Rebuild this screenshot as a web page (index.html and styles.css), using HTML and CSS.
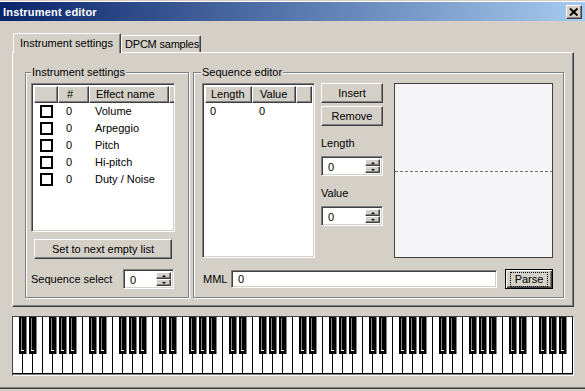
FILE: index.html
```html
<!DOCTYPE html>
<html>
<head>
<meta charset="utf-8">
<title>Instrument editor</title>
<link rel="stylesheet" href="styles.css">
</head>
<body>
<div class="window">
  <div class="titlebar">
    <span class="title">Instrument editor</span>
    <span class="close raised"><svg width="14" height="12" viewBox="0 0 14 12"><path d="M3 2.5 L10.5 9.5 M10.5 2.5 L3 9.5" stroke="#000" stroke-width="1.8" fill="none"/></svg></span>
  </div>
  <div class="client">
    <div class="tabs">
      <div class="tab active">Instrument settings</div>
      <div class="tab">DPCM samples</div>
    </div>
    <div class="panel">
      <fieldset class="group inst">
        <legend>Instrument settings</legend>
        <div class="inst-body">
          <div class="list sunken inst-list">
            <div class="lhead">
              <span class="hc c-chk"></span><span class="hc c-num">#</span><span class="hc c-name">Effect name</span><span class="hc c-rest"></span>
            </div>
            <div class="lrow"><span class="c-chk"><i class="chk"></i></span><span class="c-num">0</span><span class="c-name">Volume</span></div>
            <div class="lrow"><span class="c-chk"><i class="chk"></i></span><span class="c-num">0</span><span class="c-name">Arpeggio</span></div>
            <div class="lrow"><span class="c-chk"><i class="chk"></i></span><span class="c-num">0</span><span class="c-name">Pitch</span></div>
            <div class="lrow"><span class="c-chk"><i class="chk"></i></span><span class="c-num">0</span><span class="c-name">Hi-pitch</span></div>
            <div class="lrow"><span class="c-chk"><i class="chk"></i></span><span class="c-num">0</span><span class="c-name">Duty / Noise</span></div>
          </div>
          <div class="btn raised next-btn">Set to next empty list</div>
          <div class="seq-select">
            <span>Sequence select</span>
            <div class="spin sunken seq-spin">
              <span class="spin-val">0</span>
              <span class="spin-btns"><span class="sb raised"><i class="up"></i></span><span class="sb raised"><i class="down"></i></span></span>
            </div>
          </div>
        </div>
      </fieldset>
      <fieldset class="group seq">
        <legend>Sequence editor</legend>
        <div class="seq-body">
          <div class="seq-top">
            <div class="list sunken seq-list">
              <div class="lhead">
                <span class="hc s-len">Length</span><span class="hc s-val">Value</span><span class="hc c-rest"></span>
              </div>
              <div class="lrow"><span class="s-len">0</span><span class="s-val">0</span></div>
            </div>
            <div class="mid">
              <div class="btn raised mid-btn">Insert</div>
              <div class="btn raised mid-btn gap3">Remove</div>
              <div class="mlabel first">Length</div>
              <div class="spin sunken mid-spin">
                <span class="spin-val">0</span>
                <span class="spin-btns"><span class="sb raised"><i class="up"></i></span><span class="sb raised"><i class="down"></i></span></span>
              </div>
              <div class="mlabel second">Value</div>
              <div class="spin sunken mid-spin">
                <span class="spin-val">0</span>
                <span class="spin-btns"><span class="sb raised"><i class="up"></i></span><span class="sb raised"><i class="down"></i></span></span>
              </div>
            </div>
            <div class="graph"><div class="dash"></div></div>
          </div>
          <div class="mml-row">
            <span class="mml-label">MML</span>
            <div class="sunken mml-input">0</div>
            <div class="btn default parse"><span class="focus">Parse</span></div>
          </div>
        </div>
      </fieldset>
    </div>
    <div class="piano">
      <svg width="560" height="58" viewBox="0 0 560 58">
        <defs>
          <pattern id="oct" width="70" height="58" patternUnits="userSpaceOnUse">
            <rect width="70" height="58" fill="#fff"/>
            <g fill="#000">
              <rect x="9" width="1" height="57"/>
              <rect x="19" width="1" height="57"/>
              <rect x="29" width="1" height="57"/>
              <rect x="39" width="1" height="57"/>
              <rect x="49" width="1" height="57"/>
              <rect x="59" width="1" height="57"/>
              <rect x="69" width="1" height="57"/>
              <rect y="56" width="70" height="1"/>
            </g>
            <rect y="57" width="70" height="1" fill="#808080"/>
            <g>
              <rect x="6" width="7" height="37" fill="#000"/><rect x="13" width="1" height="37" fill="#808080"/><rect x="8" y="1" width="1" height="32" fill="#8a8a8a"/><rect x="8" y="33" width="3" height="1" fill="#fff"/>
              <rect x="16" width="7" height="37" fill="#000"/><rect x="23" width="1" height="37" fill="#808080"/><rect x="18" y="1" width="1" height="32" fill="#8a8a8a"/><rect x="18" y="33" width="3" height="1" fill="#fff"/>
              <rect x="36" width="7" height="37" fill="#000"/><rect x="43" width="1" height="37" fill="#808080"/><rect x="38" y="1" width="1" height="32" fill="#8a8a8a"/><rect x="38" y="33" width="3" height="1" fill="#fff"/>
              <rect x="46" width="7" height="37" fill="#000"/><rect x="53" width="1" height="37" fill="#808080"/><rect x="48" y="1" width="1" height="32" fill="#8a8a8a"/><rect x="48" y="33" width="3" height="1" fill="#fff"/>
              <rect x="56" width="7" height="37" fill="#000"/><rect x="63" width="1" height="37" fill="#808080"/><rect x="58" y="1" width="1" height="32" fill="#8a8a8a"/><rect x="58" y="33" width="3" height="1" fill="#fff"/>
            </g>
          </pattern>
        </defs>
        <rect width="560" height="58" fill="url(#oct)"/>
      </svg>
    </div>
  </div>
</div>
</body>
</html>
```

FILE: styles.css
```css
* { box-sizing: border-box; }
html, body { margin: 0; padding: 0; }
body {
  width: 585px; height: 391px; overflow: hidden;
  background: #d4d0c8;
  font-family: "Liberation Sans", Arial, sans-serif;
  font-size: 11px; color: #000;
}
.window {
  width: 585px; height: 389px;
  display: flex; flex-direction: column;
  border-top: 1px solid #d4d0c8;
  border-bottom: 1px solid #404040;
  box-shadow: inset 0 -1px #808080;
}
.titlebar {
  height: 20px;
  border-top: 1px solid #fff;
  background: linear-gradient(to right, #0a246a, #a6caf0);
  display: flex; align-items: center; justify-content: space-between;
  padding: 0 3px 0 3px;
}
.title { color: #fff; font-weight: bold; font-size: 11px; letter-spacing: 0.2px; }
.raised {
  background: #d4d0c8;
  border: 1px solid; border-color: #fff #404040 #404040 #fff;
  box-shadow: inset -1px -1px #808080;
}
.sunken {
  background: #fff;
  border: 1px solid; border-color: #808080 #fff #fff #808080;
  box-shadow: inset 1px 1px #404040, inset -1px -1px #d4d0c8;
}
.close { width: 16px; height: 14px; display: flex; align-items: center; justify-content: center; }
.close svg { display: block; }
.client { flex: 1; display: flex; flex-direction: column; padding: 12px 11px 0 12px; }
.tabs { display: flex; align-items: flex-end; height: 19px; margin-left: 1px; }
.tab {
  height: 17px; padding: 2px 0 0 3px; line-height: 13px;
  border-top: 1px solid #fff; border-left: 1px solid #fff; border-right: 1px solid #404040;
  box-shadow: inset -1px 0 #808080;
  border-radius: 2px 2px 0 0;
  background: #d4d0c8;
  white-space: nowrap; overflow: hidden;
}
.tab.active {
  width: 108px; height: 20px; margin-bottom: -1px;
  padding: 3px 0 0 6px; line-height: 13px;
  position: relative; z-index: 1;
}
.tab:not(.active) { width: 80px; letter-spacing: -0.2px; }
.panel {
  width: 562px; height: 255px;
  border: 1px solid; border-color: #fff #404040 #404040 #fff;
  box-shadow: inset -1px -1px #808080;
  display: flex; gap: 4px;
  padding: 13px 0 0 12px;
}
.group {
  margin: 0; padding: 0; min-width: 0;
  height: 232px;
  border: 1px solid #808080;
  box-shadow: inset 1px 1px #fff, 1px 1px #fff;
}
.group legend {
  padding: 0 1px; line-height: 13px; height: 13px;
  background: #d4d0c8;
}
.inst { width: 164px; }
.inst legend { margin-left: 5px; }
.seq { width: 371px; }
.seq legend { margin-left: 7px; }
.inst-body { padding: 4px 0 0 5px; display: flex; flex-direction: column; }
.list { overflow: hidden; }
.inst-list { width: 144px; height: 149px; padding: 2px; }
.lhead { display: flex; height: 17px; }
.hc {
  height: 17px; line-height: 14px; padding-left: 6px;
  border: 1px solid; border-color: #fff #404040 #404040 #fff;
  box-shadow: inset -1px -1px #808080;
  background: #d4d0c8; white-space: nowrap;
}
.c-chk { width: 24px; flex: none; }
.c-num { width: 31px; flex: none; padding-left: 8px; }
.c-name { width: 80px; flex: none; }
.c-rest { flex: 1; }
.lrow { display: flex; height: 17px; line-height: 17px; align-items: center; }
.lrow .c-name { padding-left: 6px; }
.lrow .c-chk { display: flex; align-items: center; padding-left: 6px; }
.chk { display: block; width: 13px; height: 13px; border: 2px solid #000; background: #fff; }
.btn { display: flex; align-items: center; justify-content: center; height: 20px; }
.next-btn { width: 138px; margin: 7px 0 0 3px; }
.seq-select { display: flex; align-items: center; justify-content: space-between; width: 143px; margin-top: 10px; }
.spin { display: flex; height: 20px; padding: 2px; }
.spin-val { flex: 1; padding-left: 4px; line-height: 16px; }
.spin-btns { display: flex; flex-direction: column; width: 15px; }
.sb { height: 8px; display: flex; align-items: center; justify-content: center; }
.sb i { display: block; width: 0; height: 0; border-left: 2px solid transparent; border-right: 2px solid transparent; }
.sb i.up { border-bottom: 2px solid #000; }
.sb i.down { border-top: 2px solid #000; }
.seq-spin { width: 51px; }
.seq-body { padding: 4px 0 0 8px; display: flex; flex-direction: column; }
.seq-top { display: flex; align-items: flex-start; }
.seq-list { width: 113px; height: 175px; padding: 2px; }
.s-len { width: 47px; flex: none; padding-left: 5px; }
.s-val { width: 44px; flex: none; padding-left: 7px; }
.mid { width: 62px; margin-left: 6px; display: flex; flex-direction: column; }
.mid-btn { width: 62px; }
.gap3 { margin-top: 3px; }
.mlabel { height: 13px; line-height: 13px; }
.mlabel.first { margin-top: 11px; }
.mlabel.second { margin-top: 11px; }
.mid-spin { width: 62px; margin-top: 6px; }
.graph {
  width: 159px; height: 175px; margin-left: 11px;
  background: #f5f4f7; border: 1px solid #404040;
  display: flex; flex-direction: column; justify-content: center;
}
.dash { height: 1px; margin-top: 1px; background: repeating-linear-gradient(to right, #707070 0 3px, transparent 3px 5px); }
.mml-row { display: flex; align-items: center; height: 20px; margin-top: 11px; padding-left: 1px; }
.mml-label { width: 28px; }
.mml-input { width: 266px; height: 18px; line-height: 16px; padding-left: 6px; }
.parse {
  width: 48px; height: 20px; margin-left: 8px;
  border: 1px solid #000; background: #d4d0c8;
  box-shadow: inset 1px 1px #fff, inset -1px -1px #404040, inset -2px -2px #808080;
}
.focus { outline: 1px dotted #000; padding: 0 4px; line-height: 13px; }
.piano {
  width: 562px; height: 60px; margin-top: 9px;
  border: 1px solid; border-color: #404040 #fff #fff #404040;
}
.piano svg { display: block; }
```
